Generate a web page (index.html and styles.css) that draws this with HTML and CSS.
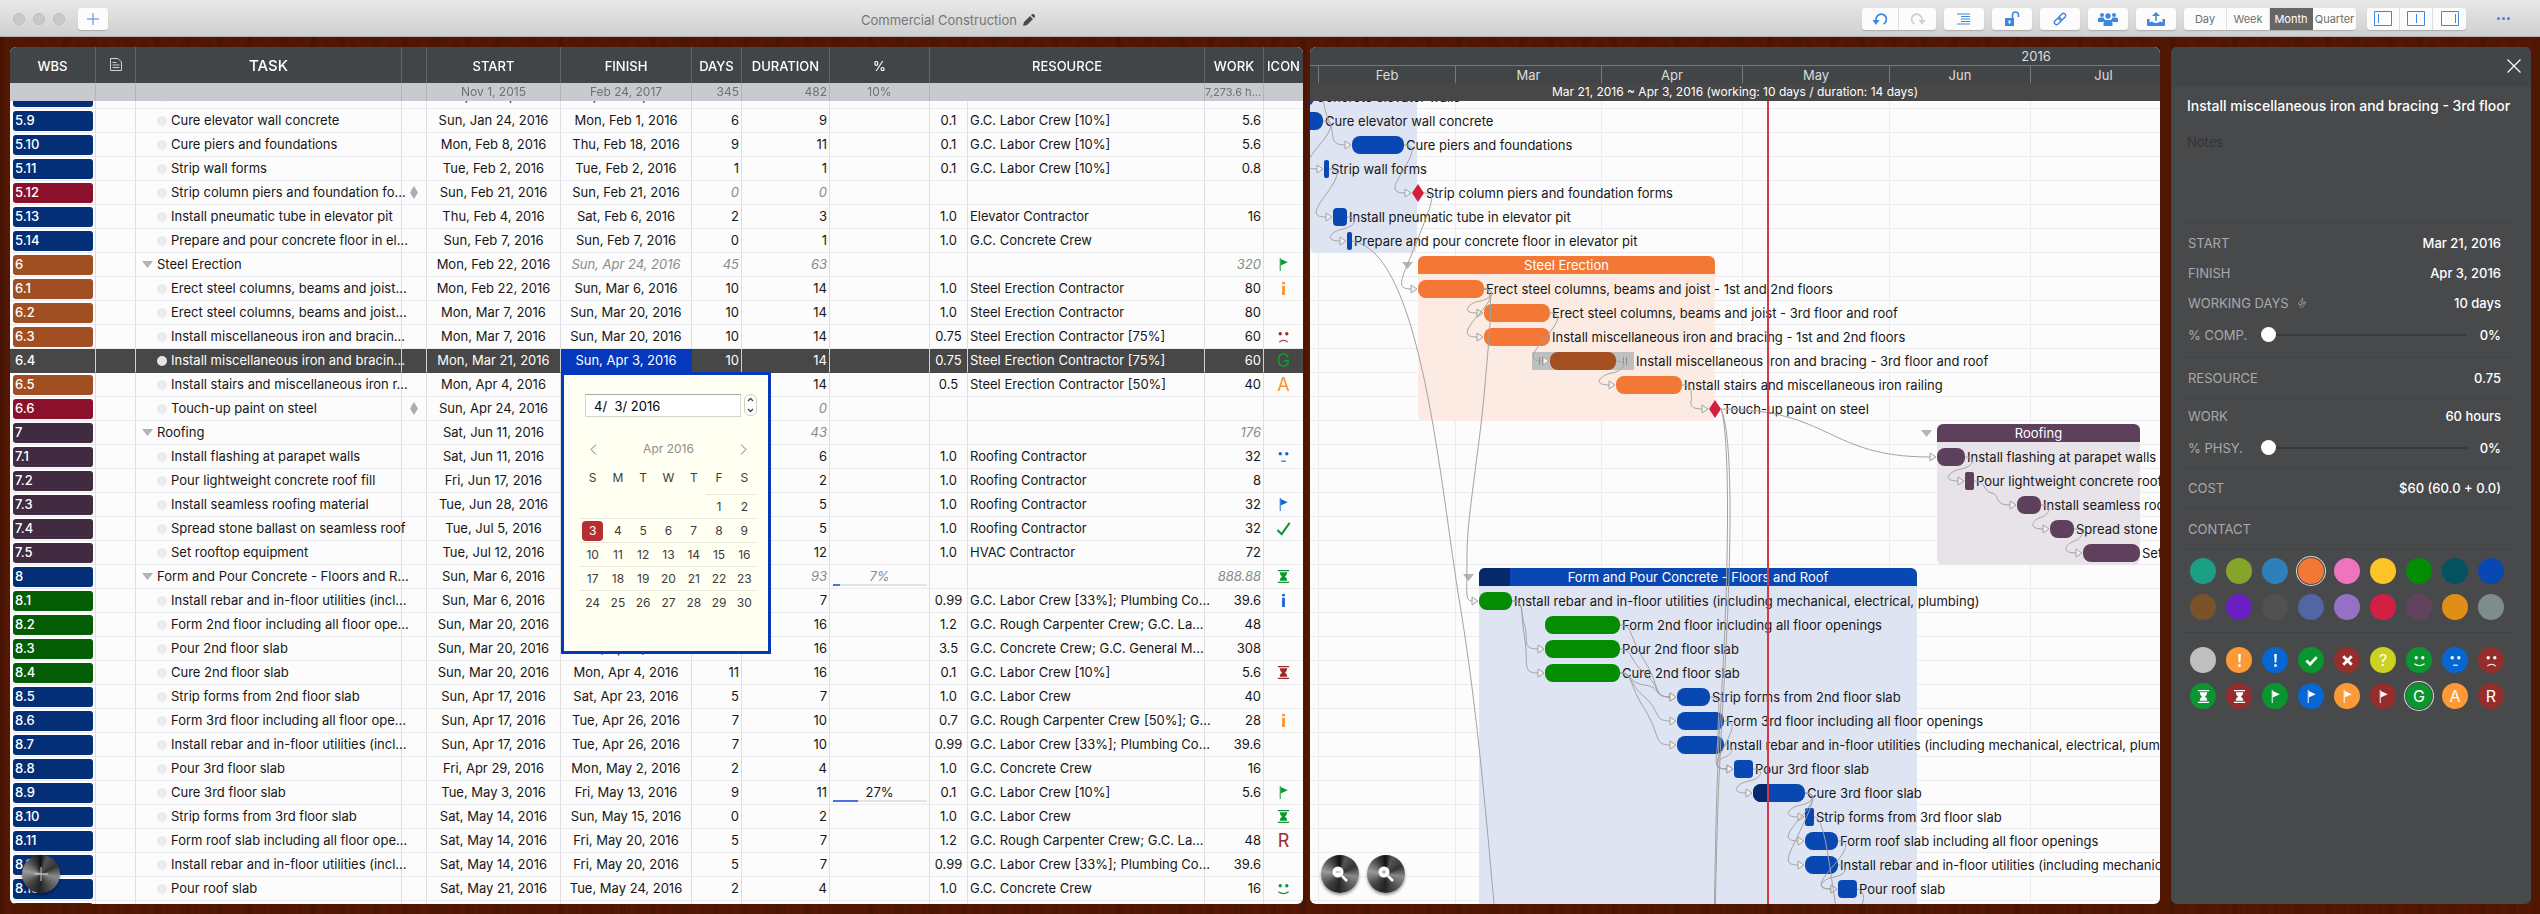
FILE: index.html
```html
<!DOCTYPE html>
<html lang="en">
<head>
<meta charset="utf-8">
<title>Commercial Construction</title>
<link rel="stylesheet" href="styles.css">
</head>
<body class="app">

<svg class="defs" width="0" height="0" aria-hidden="true">
  <symbol id="i-flag" viewBox="0 0 16 16"><path d="M4.500 1v14" stroke="currentColor" fill="none"/><path d="M5 2l7.500 3.500L5 9z" fill="currentColor"/></symbol>
  <symbol id="i-info" viewBox="0 0 16 16"><path d="M6.500 1h3v2.500h-3zM6.500 5h3v10h-3z" fill="currentColor"/></symbol>
  <symbol id="i-sad" viewBox="0 0 16 16"><circle cx="4.500" cy="5" r="1.800" fill="currentColor"/><circle cx="11.500" cy="5" r="1.800" fill="currentColor"/><path d="M3.500 14q4.500-4 9 0" stroke="currentColor" stroke-width="1.200" fill="none"/></symbol>
  <symbol id="i-flat" viewBox="0 0 16 16"><circle cx="4.500" cy="5" r="1.800" fill="currentColor"/><circle cx="11.500" cy="5" r="1.800" fill="currentColor"/><path d="M5.500 13h5" stroke="currentColor" stroke-width="1.200" fill="none"/></symbol>
  <symbol id="i-smile" viewBox="0 0 16 16"><circle cx="4.500" cy="5" r="1.800" fill="currentColor"/><circle cx="11.500" cy="5" r="1.800" fill="currentColor"/><path d="M2.500 11.500q5.500 4 11 0" stroke="currentColor" stroke-width="1.200" fill="none"/></symbol>
  <symbol id="i-check" viewBox="0 0 16 16"><path d="M1.500 9.500L6 14 14.500 2" stroke="currentColor" stroke-width="2.200" fill="none"/></symbol>
  <symbol id="i-glass" viewBox="0 0 16 16"><path d="M2 1h12v1.500H2zM2 13.500h12V15H2zM4 3.500h8q0 3-2.500 4.500Q12 9.500 12 12.500H4Q4 9.500 6.500 8 4 6.500 4 3.500z" fill="currentColor"/></symbol>
  <symbol id="i-bang" viewBox="0 0 16 16"><path d="M6.600 1h2.800l-.5 9H7.100zM6.700 12h2.600v2.600H6.700z" fill="currentColor"/></symbol>
  <symbol id="i-tick" viewBox="0 0 16 16"><path d="M2.500 8l4 4L13.500 4.500" stroke="currentColor" stroke-width="2.800" fill="none"/></symbol>
  <symbol id="i-cross" viewBox="0 0 16 16"><path d="M3.500 3.500l9 9m0-9l-9 9" stroke="currentColor" stroke-width="3" fill="none"/></symbol>
</svg>

<header class="toolbar">
  <div class="toolbar-left">
    <span class="light"></span><span class="light"></span><span class="light"></span>
    <button class="tool tool-add" aria-label="New"><svg width="12" height="12" viewBox="0 0 12 12"><path d="M6 0v12M0 6h12"/></svg></button>
  </div>
  <h1 class="doc-title">Commercial Construction
    <svg class="pencil" width="12" height="12" viewBox="0 0 12 12"><path d="M0 12l1-4L7 2l3 3-6 6zM8 1l1-1h1.500L12 1.500V3l-1 1z"/></svg>
  </h1>
  <div class="toolbar-right">
    <div class="group">
      <button class="tool" aria-label="Undo"><svg width="17" height="14" viewBox="0 0 17 14"><path class="thick" d="M4 10V7a5.200 5.200 0 1 1 7.500 5"/><path class="fill" d="M.5 8h7L4 13z"/></svg></button>
      <button class="tool tool-off" aria-label="Redo"><svg width="17" height="14" viewBox="0 0 17 14"><path class="thick" d="M13 10V7a5.200 5.200 0 1 0-7.500 5"/><path class="fill" d="M9.500 8h7L13 13z"/></svg></button>
    </div>
    <button class="tool" aria-label="Outline"><svg width="14" height="12" viewBox="0 0 14 12"><path d="M0 1h13M4 3.500h9M4 6h9M4 8.500h9M0 11h13"/></svg></button>
    <button class="tool" aria-label="Lock"><svg width="16" height="16" viewBox="0 0 16 16"><path class="fill" fill-rule="evenodd" d="M1 7h9v8H1zM4.500 9.500v3h2v-3z"/><path class="thick" d="M8.500 7V4a3 3 0 0 1 6 0v2"/></svg></button>
    <button class="tool" aria-label="Link"><svg width="14" height="14" viewBox="0 0 16 16"><g class="thick" transform="rotate(-45 8 8)"><rect x="0" y="5.500" width="9" height="5" rx="2.500"/><rect x="7" y="5.500" width="9" height="5" rx="2.500"/></g></svg></button>
    <button class="tool" aria-label="Resources"><svg width="20" height="14" viewBox="0 0 20 14"><g class="fill"><circle cx="4" cy="3" r="2"/><circle cx="16" cy="3" r="2"/><circle cx="10" cy="4" r="2.700"/><path d="M0 10V7q0-1.500 2-1.500h3.500L7 8q-2 1-2 2zM20 10V7q0-1.500-2-1.500h-3.500L13 8q2 1 2 2zM5.500 14v-4q0-2 2-2h5q2 0 2 2v4z"/></g></svg></button>
    <button class="tool" aria-label="Share"><svg width="18" height="14" viewBox="0 0 18 14"><path class="fill" d="M0 7h2.500v3.500L5 9.500q4 3 8 0l2.500 1V7H18v6q0 1-1 1H1q-1 0-1-1zM9 0l4 4H5z"/><path class="thick" d="M9 3v6"/></svg></button>
    <div class="group scale">
      <button class="seg">Day</button><button class="seg">Week</button><button class="seg seg-on">Month</button><button class="seg">Quarter</button>
    </div>
    <div class="group panes">
      <button class="tool" aria-label="Left pane"><svg width="18" height="15" viewBox="0 0 18 15"><path d="M.5.5h17v14H.5zM4.500 3v9"/></svg></button>
      <button class="tool" aria-label="Split panes"><svg width="18" height="15" viewBox="0 0 18 15"><path d="M.5.5h17v14H.5zM9.500 3v9"/></svg></button>
      <button class="tool" aria-label="Right pane"><svg width="18" height="15" viewBox="0 0 18 15"><path d="M.5.5h17v14H.5zM14.500 3v9"/></svg></button>
    </div>
    <button class="more" aria-label="More"><svg width="13" height="3" viewBox="0 0 13 3"><g class="fill"><circle cx="1.500" cy="1.500" r="1.500"/><circle cx="6.500" cy="1.500" r="1.500"/><circle cx="11.500" cy="1.500" r="1.500"/></g></svg></button>
  </div>
</header>

<main class="desk">
  <section class="sheet">
    <div class="sheet-scroll" id="sheet-scroll">
      <table class="tasks">
        <colgroup>
          <col style="width:86px"><col style="width:40px"><col><col style="width:25px"><col style="width:134px"><col style="width:131px"><col style="width:50px"><col style="width:88px"><col style="width:100px"><col style="width:38px"><col style="width:237px"><col style="width:59px"><col style="width:39px">
        </colgroup>
        <thead>
          <tr class="heads">
            <th>WBS</th>
            <th><svg width="12" height="13" viewBox="0 0 12 13"><path d="M.5.5h7.500l3.500 3.500v8.500H.5zM2.500 4.500h4M2.500 7h7M2.500 9.500h7" fill="none" stroke="#d0d1d2"/></svg></th>
            <th class="big">TASK</th><th></th><th>START</th><th>FINISH</th><th>DAYS</th><th>DURATION</th><th>%</th><th colspan="2">RESOURCE</th><th>WORK</th><th>ICON</th>
          </tr>
          <tr class="totals">
            <td></td><td></td><td></td><td></td><td class="mid">Nov 1, 2015</td><td class="mid">Feb 24, 2017</td><td class="num">345</td><td class="num">482</td><td class="mid">10%</td><td colspan="2"></td><td class="num total-work">7,273.6 h...</td><td></td>
          </tr>
        </thead>
        <tbody id="rows"></tbody>
      </table>
    </div>
    <button class="knob knob-add" aria-label="Add task"><svg width="14" height="14" viewBox="0 0 14 14"><path d="M7 0v14M0 7h14" stroke="#d8d8d8"/></svg></button>
  </section>

  <section class="gantt">
    <div class="gantt-head">
      <div class="years" id="years"></div>
      <div class="months" id="months"></div>
      <p class="span">Mar 21, 2016 ~ Apr 3, 2016 (working: 10 days / duration: 14 days)</p>
    </div>
    <div class="gantt-scroll" id="gantt-scroll">
      <div class="chart" id="chart"></div>
    </div>
    <div class="knobs">
      <button class="knob" aria-label="Zoom out"><svg width="16" height="16" viewBox="0 0 16 16"><circle cx="6" cy="6" r="5.500" fill="#fff"/><path d="M10 10l5 5" stroke="#fff" stroke-width="2.500"/><path d="M4 6h4" stroke="#999"/></svg></button>
      <button class="knob" aria-label="Zoom in"><svg width="16" height="16" viewBox="0 0 16 16"><circle cx="6" cy="6" r="5.500" fill="#fff"/><path d="M10 10l5 5" stroke="#fff" stroke-width="2.500"/><path d="M4 6h4M6 4v4" stroke="#999"/></svg></button>
    </div>
  </section>

  <aside class="details">
    <div class="details-head">
      <button class="close" aria-label="Close"><svg width="14" height="14" viewBox="0 0 14 14"><path d="M.5.5l13 13m0-13l-13 13" stroke="#fff" stroke-width="1.200"/></svg></button>
    </div>
    <div class="memo">
      <input class="name" aria-label="Task name" value="Install miscellaneous iron and bracing - 3rd floor and roof">
      <textarea class="notes" aria-label="Notes" placeholder="Notes"></textarea>
    </div>
    <div class="block block-dates">
      <div class="field"><span class="label">START</span><span class="value">Mar 21, 2016</span></div>
      <div class="field"><span class="label">FINISH</span><span class="value">Apr 3, 2016</span></div>
      <div class="field"><span class="label">WORKING DAYS <svg class="pin" width="10" height="12" viewBox="0 0 10 12"><path d="M1 7l5-6-1 4M5 11l4-6-5 3M1 7l3 1M3 11l2-6 4 0" fill="none" stroke="#8a8b8d"/></svg></span><span class="value">10 days</span></div>
      <div class="field"><label class="label" for="comp">% COMP.</label><input class="slider" id="comp" type="range" value="0"><span class="value">0%</span></div>
    </div>
    <div class="block"><div class="field"><span class="label">RESOURCE</span><span class="value">0.75</span></div></div>
    <div class="block block-work">
      <div class="field"><span class="label">WORK</span><span class="value">60 hours</span></div>
      <div class="field"><label class="label" for="phsy">% PHSY.</label><input class="slider" id="phsy" type="range" value="0"><span class="value">0%</span></div>
    </div>
    <div class="block"><div class="field"><span class="label">COST</span><span class="value">$60 (60.0 + 0.0)</span></div></div>
    <div class="block"><div class="field"><span class="label">CONTACT</span></div></div>
    <div class="dots dots-colors" id="colors"></div>
    <div class="dots" id="marks"></div>
  </aside>
</main>
<script src="app.js"></script>
</body>
</html>
```

FILE: styles.css
```css
* { box-sizing: border-box; }
body.app {
  margin: 0;
  height: 100vh;
  display: flex;
  flex-direction: column;
  overflow: hidden;
  font: 13px/18px Inter, "Liberation Sans", sans-serif;
  color: #161616;
  background-color: #511703;
  background-image:
    repeating-linear-gradient(90deg, rgba(0,0,0,.06) 0 2px, transparent 2px 7px, rgba(120,40,10,.08) 7px 9px, transparent 9px 13px),
    repeating-linear-gradient(90deg, rgba(0,0,0,.07) 0 5px, transparent 5px 31px);
}
button { font: inherit; padding: 0; border: 0; background: none; }
.defs { display: none; }

/* toolbar */
.toolbar {
  flex: none;
  display: flex;
  align-items: center;
  height: 37px;
  padding: 1px 30px 0 13px;
  border-bottom: 1px solid #b4b0ae;
  background: linear-gradient(#e9e9e9, #cfcfcf);
}
.toolbar-left, .toolbar-right { display: flex; align-items: center; gap: 8px; }
.light { width: 12px; height: 12px; border-radius: 50%; background: #c9c9c9; border: 1px solid #bdbdbd; }
.doc-title { flex: 1; display: flex; align-items: center; justify-content: center; gap: 6px; margin: 0; padding: 3px 74px 0 0; font-size: 13px; font-weight: 400; color: #757575; }
.pencil path { fill: #4a4a4a; }
.tool { display: flex; align-items: center; justify-content: center; width: 40px; height: 22px; border-radius: 3px; background: #fcfcfc; box-shadow: 0 1px 1px rgba(0,0,0,.18); color: #3f87dc; }
.tool-add { width: 30px; margin-left: 5px; }
.tool path, .tool rect { fill: none; stroke: currentColor; }
.tool .thick, .tool .thick rect { stroke-width: 1.6; fill: none; stroke: currentColor; }
.tool .fill, .tool .fill path, .more .fill { fill: currentColor; stroke: none; }
.tool-off { color: #cfcfcf; }
.group { display: flex; }
.group .tool { width: 37px; border-radius: 0; border-right: 1px solid #e2e2e2; }
.group .tool:first-child { border-radius: 3px 0 0 3px; }
.group .tool:last-child { border-right: 0; border-radius: 0 3px 3px 0; }
.panes { margin-left: 3px; }
.panes .tool { width: 33px; }
.scale { border-radius: 3px; background: #fcfcfc; box-shadow: 0 1px 1px rgba(0,0,0,.18); }
.seg { width: 43px; height: 22px; font-size: 11px; color: #6e6e6e; border-right: 1px solid #e2e2e2; }
.seg:last-child { border-right: 0; }
.seg-on { background: #666; color: #fff; border-color: #666; }
.more { margin-left: 23px; color: #3f87dc; display: flex; }

/* panels */
.desk { flex: 1; min-height: 0; display: flex; padding: 10px 9px 10px 10px; }
.sheet, .gantt, .details { position: relative; border-radius: 6px; overflow: hidden; }
.sheet { flex: 1293 1 0; min-width: 0; margin-right: 7px; background: #fcfcfc; }
.gantt { flex: 850 1 0; min-width: 0; margin-right: 11px; background: #fcfcfc; display: flex; flex-direction: column; }
.details { flex: 0 0 360px; background: #48494b; color: #fff; }
.sheet-scroll { height: 100%; overflow: hidden; }

/* task table */
.tasks { width: 100%; table-layout: fixed; border-collapse: separate; border-spacing: 0; }
.tasks thead { position: sticky; top: 0; z-index: 2; }
.heads th { height: 36px; padding: 2px 0 0; font-weight: 500; color: #fff; background: #424547; border-right: 1px solid #636567; }
.heads .big { font-size: 15px; }
.totals td { height: 18px; padding: 0 2px; font-size: 12px; line-height: 18px; white-space: nowrap; color: #707174; background: #c9cacf; border-right: 1px solid #b3b4b8; }
.tasks tr > :last-child { border-right: 0; }
.tasks .mid { text-align: center; }
.tasks .num { text-align: right; padding: 0 2px 0 0; }
.totals .total-work { font-size: 11px; }
.row td { height: 24px; padding: 0; line-height: 23px; border-right: 1px solid #dfdfe2; border-bottom: 1px solid #ebebee; white-space: nowrap; }
.row .sum { font-style: italic; color: #8a8a8a; }
.row .chip-cell { padding: 1px 2px 1px 3px; }
.chip { display: block; height: 20px; line-height: 19px; padding-left: 2px; border-radius: 3px; color: #fff; font-weight: 500; }
.c-blue { background: #042f76; }
.c-red { background: #8a102b; }
.c-orange { background: #a04f22; }
.c-purple { background: #402b40; }
.c-green { background: #045c04; }
.task { display: flex; align-items: center; gap: 4px; padding: 0 0 0 21px; }
.task-group { padding-left: 6px; }
.bullet { flex: none; width: 10px; height: 10px; border-radius: 50%; background: #ececec; }
.fold { flex: none; width: 11px; height: 7px; background: #b4b4b4; clip-path: polygon(0 0, 100% 0, 50% 100%); }
.gem { display: block; width: 8px; height: 13px; margin: 0 auto; background: #adadad; clip-path: polygon(50% 0, 100% 50%, 50% 100%, 0 50%); }
.row .res { padding: 0 0 0 2px; }
.icon { display: flex; justify-content: center; align-items: center; height: 23px; font-size: 18px; }
.icon svg { width: 15px; height: 15px; }
.k-green { color: #0f9634; } .k-orange { color: #fb9433; } .k-red { color: #9b2c2c; } .k-blue { color: #1467d0; }
.pct { position: relative; }
.meter { position: absolute; left: 3px; right: 2px; bottom: 2px; height: 2px; background: #e4e4e6; }
.meter-fill { height: 100%; background: #4a6fe6; }
.picked td { background: #474747; color: #fff; border-right-color: #d0d0d0; border-bottom-color: #474747; }
.picked .chip { background: none; }
.picked .bullet { background: #e4e4e4; }
.row .editing { position: relative; background: #0638bd; border-color: #0638bd; }

/* date picker */
.picker { position: absolute; z-index: 3; left: 0; top: 100%; width: 210px; height: 282px; padding: 19px 11px 19px 16px; border: 3px solid #0638bd; background: #fffff2; color: #3c3c3c; font-size: 12px; line-height: 24px; }
.picker-field { display: flex; gap: 3px; padding: 0 0 0 5px; }
.picker-input { flex: 1; min-width: 0; height: 23px; padding: 0 8px; border: 1px solid #d6d6d0; border-top-color: #a9a9a4; background: #fff; font: 13px Inter, sans-serif; }
.stepper { width: 13px; height: 22px; border: 1px solid #cfcfcf; border-radius: 6px; background: #fff; display: flex; align-items: center; justify-content: center; }
.picker-nav { display: flex; justify-content: space-between; align-items: center; padding: 0 10px; margin: 20px 0 5px; color: #8f8f88; }
.picker-nav button { display: flex; }
.cal { display: grid; grid-template-columns: repeat(7, 1fr); text-align: center; }
.cal-head { margin-bottom: 4px; }
.day { height: 24px; line-height: 24px; border-top: 1px solid #e7e7dd; color: inherit; }
.day-gap { grid-column: span 5; }
.day-on { color: #fff; }
.day-on span { display: block; margin: 1px 2px; line-height: 20px; border-radius: 4px; background: #b52f32; }

/* gantt */
.gantt-head { flex: none; background: #424547; color: #dcdcdc; text-align: center; font-size: 13px; }
.years { height: 18px; overflow: hidden; }
.months { height: 18px; display: flex; overflow: hidden; border-top: 1px solid #77797b; }
.month { flex: none; border-right: 1px solid #77797b; }
.span { margin: 0; height: 18px; overflow: hidden; background: #474747; color: #fff; font-size: 12px; }
.gantt-scroll { flex: 1; min-height: 0; overflow: hidden; }
.chart { position: relative; background: repeating-linear-gradient(transparent 0 23px, #ececef 23px 24px); }
.chart-line, .zone, .bar, .bar-label, .today, .links, .gantt-fold, .handle { position: absolute; }
.chart-line { top: 0; bottom: 0; width: 1px; background: #ededf0; }
.zone { border-radius: 0 0 6px 6px; }
.bar { height: 18px; border-radius: 8px; overflow: hidden; }
.bar-thin { border-radius: 2px; }
.bar-short { border-radius: 4px; }
.bar-group { border-radius: 6px 6px 0 0; color: #fff; text-align: center; }
.bar-done { position: absolute; left: 0; top: 0; bottom: 0; background: #06296c; }
.bar-text { position: relative; line-height: 19px; }
.bar-label { white-space: nowrap; line-height: 19px; }
.g-blue { background: #0947b3; } .g-orange { background: #f37735; } .g-brown { background: #a34f20; } .g-purple { background: #5e405c; } .g-green { background: #048c02; }
.z-blue { background: #dfe4f3; } .z-orange { background: #fcebe2; } .z-purple { background: #e7e3e8; }
.diamond { width: 12px; height: 18px; border-radius: 0; background: #d41f3f; clip-path: polygon(50% 0, 100% 50%, 50% 100%, 0 50%); }
.handle { height: 18px; background: #bfbfbf; display: flex; justify-content: space-between; padding: 5px 7px; }
.handle i { width: 4px; border: solid #8c8c8c; border-width: 0 1px; }
.gantt-fold { width: 11px; height: 7px; background: #b4b4b4; clip-path: polygon(0 0, 100% 0, 50% 100%); }
.links { left: 0; top: 0; width: 100%; height: 100%; pointer-events: none; }
.links path { fill: none; stroke: #a3a3a3; stroke-width: 1; }
.links .tip { fill: #f2f2f4; }
.today { top: 0; bottom: 0; width: 2px; background: #d63845; }

/* round metal buttons */
.knob { display: flex; align-items: center; justify-content: center; width: 38px; height: 38px; border-radius: 50%; box-shadow: 0 2px 3px rgba(0,0,0,.4); background: conic-gradient(from 20deg, #555, #333 12%, #8a8a8a 22%, #555 34%, #222 46%, #444 58%, #9a9a9a 72%, #4a4a4a 84%, #111 94%, #555); }
.knob-add { position: absolute; left: 12px; bottom: 11px; z-index: 4; }
.knobs { position: absolute; left: 11px; bottom: 11px; display: flex; gap: 8px; }

/* details */
.details-head { height: 40px; padding: 12px 10px 0 0; display: flex; justify-content: flex-end; align-items: flex-start; background: #424547; }
.memo { margin: 0 19px 0 13px; height: 136px; padding: 8px 0 0 3px; border-bottom: 1px solid #414244; }
.name { display: block; width: 100%; height: 22px; padding: 0; border: 0; background: none; color: #fff; font: 500 14px/22px Inter, sans-serif; }
.notes { display: block; width: 100%; height: 70px; margin-top: 15px; padding: 0; border: 0; resize: none; background: none; color: #fff; font: 13px/20px Inter, sans-serif; }
.notes::placeholder { color: #333436; }
.block { margin: 0 19px 0 13px; padding: 5px 11px 5px 4px; border-bottom: 1px solid #414244; }
.block-dates { padding-bottom: 6px; }
.block-work { padding-top: 2px; padding-bottom: 3px; }
.field { display: flex; align-items: center; height: 30px; }
.field:has(.slider) { height: 33px; }
.label { flex: 1; color: #a9aaac; }
.pin { margin-left: 5px; vertical-align: -1px; }
.value { color: #fff; font-weight: 500; text-align: right; }
.slider + .value { width: 34px; }
.slider { appearance: none; width: 206px; height: 16px; margin: 0; background: linear-gradient(#38393b, #38393b) center / 100% 2px no-repeat; }
.slider::-webkit-slider-thumb { appearance: none; width: 15px; height: 15px; border-radius: 50%; background: #fff; }
.dots { display: grid; grid-template-columns: repeat(9, 36px); row-gap: 10px; margin: 0 19px 0 14px; padding: 14px 0; }
.dots-colors { padding: 8px 0 12px; border-bottom: 1px solid #414244; }
.dot { width: 26px; height: 26px; margin-left: 5px; border-radius: 50%; color: #fff; display: flex; align-items: center; justify-content: center; font-size: 16px; line-height: 26px; }
.dot svg { width: 15px; height: 15px; }
.dot-on { box-shadow: 0 0 0 1px #48494b, 0 0 0 2px #d8d8d8; }
```

FILE: app.js
```js
const SCALE = 4.715, ORIGIN = 9, ROW = 24;
const DAY = 86400000;
const feb1 = Date.UTC(2016, 1, 1);
const dayX = (m, d) => Math.round(ORIGIN + (Date.UTC(2016, m - 1, d) - feb1) / DAY * SCALE);
const MONTHS = ['Jan', 'Feb', 'Mar', 'Apr', 'May', 'Jun', 'Jul', 'Aug'];
const WEEK = ['Sun', 'Mon', 'Tue', 'Wed', 'Thu', 'Fri', 'Sat'];
const fmt = ([m, d]) => `${WEEK[new Date(Date.UTC(2016, m - 1, d)).getUTCDay()]}, ${MONTHS[m - 1]} ${d}, 2016`;

const REBAR = 'Install rebar and in-floor utilities (including mechanical, electrical, plumbing)';
const L10 = 'G.C. Labor Crew [10%]', SEC = 'Steel Erection Contractor', ROOF = 'Roofing Contractor', GCC = 'G.C. Concrete Crew';
const LPC = 'G.C. Labor Crew [33%]; Plumbing Co...', RCC = 'G.C. Rough Carpenter Crew; G.C. La...';
// wbs, name, start, finish, days, duration, units, resource, work, color, icon, extra
const TASKS = [
  ['5.8', 'Concrete elevator walls', [1, 17], [1, 30], 10, 14, '1.0', GCC, '8', 'blue'],
  ['5.9', 'Cure elevator wall concrete', [1, 24], [2, 1], 6, 9, '0.1', L10, '5.6', 'blue'],
  ['5.10', 'Cure piers and foundations', [2, 8], [2, 18], 9, 11, '0.1', L10, '5.6', 'blue'],
  ['5.11', 'Strip wall forms', [2, 2], [2, 2], 1, 1, '0.1', L10, '0.8', 'blue'],
  ['5.12', 'Strip column piers and foundation forms', [2, 21], [2, 21], 0, 0, '', '', '', 'red'],
  ['5.13', 'Install pneumatic tube in elevator pit', [2, 4], [2, 6], 2, 3, '1.0', 'Elevator Contractor', '16', 'blue'],
  ['5.14', 'Prepare and pour concrete floor in elevator pit', [2, 7], [2, 7], 0, 1, '1.0', GCC, '', 'blue'],
  ['6', 'Steel Erection', [2, 22], [4, 24], 45, 63, '', '', '320', 'orange', 'green flag', { rows: 6 }],
  ['6.1', 'Erect steel columns, beams and joist - 1st and 2nd floors', [2, 22], [3, 6], 10, 14, '1.0', SEC, '80', 'orange', 'orange info'],
  ['6.2', 'Erect steel columns, beams and joist - 3rd floor and roof', [3, 7], [3, 20], 10, 14, '1.0', SEC, '80', 'orange'],
  ['6.3', 'Install miscellaneous iron and bracing - 1st and 2nd floors', [3, 7], [3, 20], 10, 14, '0.75', SEC + ' [75%]', '60', 'orange', 'red sad'],
  ['6.4', 'Install miscellaneous iron and bracing - 3rd floor and roof', [3, 21], [4, 3], 10, 14, '0.75', SEC + ' [75%]', '60', 'brown', 'green G', { picked: true }],
  ['6.5', 'Install stairs and miscellaneous iron railing', [4, 4], [4, 17], 10, 14, '0.5', SEC + ' [50%]', '40', 'orange', 'orange A'],
  ['6.6', 'Touch-up paint on steel', [4, 24], [4, 24], 0, 0, '', '', '', 'red'],
  ['7', 'Roofing', [6, 11], [7, 23], 30, 43, '', '', '176', 'purple', '', { rows: 5 }],
  ['7.1', 'Install flashing at parapet walls', [6, 11], [6, 16], 4, 6, '1.0', ROOF, '32', 'purple', 'blue flat'],
  ['7.2', 'Pour lightweight concrete roof fill', [6, 17], [6, 18], 1, 2, '1.0', ROOF, '8', 'purple'],
  ['7.3', 'Install seamless roofing material', [6, 28], [7, 2], 4, 5, '1.0', ROOF, '32', 'purple', 'blue flag'],
  ['7.4', 'Spread stone ballast on seamless roof', [7, 5], [7, 9], 4, 5, '1.0', ROOF, '32', 'purple', 'green check'],
  ['7.5', 'Set rooftop equipment', [7, 12], [7, 23], 9, 12, '1.0', 'HVAC Contractor', '72', 'purple'],
  ['8', 'Form and Pour Concrete - Floors and Roof', [3, 6], [6, 6], 66, 93, '', '', '888.88', 'blue', 'green glass', { rows: 14, pct: 7 }],
  ['8.1', REBAR, [3, 6], [3, 12], 5, 7, '0.99', LPC, '39.6', 'green', 'blue info'],
  ['8.2', 'Form 2nd floor including all floor openings', [3, 20], [4, 4], 11, 16, '1.2', RCC, '48', 'green'],
  ['8.3', 'Pour 2nd floor slab', [3, 20], [4, 4], 11, 16, '3.5', 'G.C. Concrete Crew; G.C. General M...', '308', 'green'],
  ['8.4', 'Cure 2nd floor slab', [3, 20], [4, 4], 11, 16, '0.1', L10, '5.6', 'green', 'red glass'],
  ['8.5', 'Strip forms from 2nd floor slab', [4, 17], [4, 23], 5, 7, '1.0', 'G.C. Labor Crew', '40', 'blue'],
  ['8.6', 'Form 3rd floor including all floor openings', [4, 17], [4, 26], 7, 10, '0.7', 'G.C. Rough Carpenter Crew [50%]; G...', '28', 'blue', 'orange info'],
  ['8.7', REBAR, [4, 17], [4, 26], 7, 10, '0.99', LPC, '39.6', 'blue'],
  ['8.8', 'Pour 3rd floor slab', [4, 29], [5, 2], 2, 4, '1.0', GCC, '16', 'blue'],
  ['8.9', 'Cure 3rd floor slab', [5, 3], [5, 13], 9, 11, '0.1', L10, '5.6', 'blue', 'green flag', { pct: 27 }],
  ['8.10', 'Strip forms from 3rd floor slab', [5, 14], [5, 15], 0, 2, '1.0', 'G.C. Labor Crew', '', 'blue', 'green glass'],
  ['8.11', 'Form roof slab including all floor openings', [5, 14], [5, 20], 5, 7, '1.2', RCC, '48', 'blue', 'red R'],
  ['8.12', REBAR, [5, 14], [5, 20], 5, 7, '0.99', LPC, '39.6', 'blue'],
  ['8.13', 'Pour roof slab', [5, 21], [5, 24], 2, 4, '1.0', GCC, '16', 'blue', 'green smile'],
  ['8.14', '', [5, 25], [5, 25], '', '', '', '', '', 'blue', '', { blank: true }],
];

// names shortened to the width of the task column
const SHORT = {
  '5.12': 'Strip column piers and foundation fo...',
  '5.14': 'Prepare and pour concrete floor in el...',
  '6.1': 'Erect steel columns, beams and joist...',
  '6.2': 'Erect steel columns, beams and joist...',
  '6.3': 'Install miscellaneous iron and bracin...',
  '6.4': 'Install miscellaneous iron and bracin...',
  '6.5': 'Install stairs and miscellaneous iron r...',
  '8': 'Form and Pour Concrete - Floors and R...',
  '8.1': 'Install rebar and in-floor utilities (incl...',
  '8.2': 'Form 2nd floor including all floor ope...',
  '8.6': 'Form 3rd floor including all floor ope...',
  '8.7': 'Install rebar and in-floor utilities (incl...',
  '8.11': 'Form roof slab including all floor ope...',
  '8.12': 'Install rebar and in-floor utilities (incl...',
};

const glyph = name => name.length === 1 ? name : `<svg><use href="#i-${name}"/></svg>`;

/* date picker */
const days = [];
for (let d = 1; d <= 30; d++) days.push(d === 3 ? `<button class="day day-on"><span>3</span></button>` : `<button class="day">${d}</button>`);
const PICKER = `<div class="picker">
  <div class="picker-field"><input class="picker-input" aria-label="Finish date" value="4/  3/ 2016">
  <button class="stepper" aria-label="Step date"><svg width="7" height="16" viewBox="0 0 7 16"><path d="M1 4l2.500-2.500L6 4M1 12l2.500 2.500L6 12" fill="none" stroke="#444" stroke-width="1.300"/></svg></button></div>
  <div class="picker-nav"><button aria-label="Previous month"><svg width="7" height="11" viewBox="0 0 7 11"><path d="M6 .5l-5 5 5 5" fill="none" stroke="#777"/></svg></button><span>Apr 2016</span><button aria-label="Next month"><svg width="7" height="11" viewBox="0 0 7 11"><path d="M1 .5l5 5-5 5" fill="none" stroke="#777"/></svg></button></div>
  <div class="cal cal-head">${[...'SMTWTFS'].map(c => `<span>${c}</span>`).join('')}</div>
  <div class="cal"><span class="day-gap"></span>${days.join('')}</div>
</div>`;

/* task table */
document.getElementById('rows').innerHTML = TASKS.map(([wbs, name, start, finish, nd, dur, units, res, work, color, icon, extra = {}]) => {
  const group = !wbs.includes('.'), gem = dur === 0;
  const chip = color === 'brown' ? 'orange' : color;
  const [tone, pic] = (icon || '').split(' ');
  const sum = group ? ' sum' : '', zero = group || gem ? ' sum' : '';
  return `<tr class="row${extra.picked ? ' picked' : ''}">
    <td class="chip-cell"><span class="chip c-${chip}">${extra.blank ? '' : wbs}</span></td><td></td>
    <td>${extra.blank ? '' : `<div class="task${group ? ' task-group' : ''}"><span class="${group ? 'fold' : 'bullet'}"></span><span>${SHORT[wbs] || name}</span></div>`}</td>
    <td>${gem ? '<span class="gem"></span>' : ''}</td>
    <td class="mid">${extra.blank ? '' : fmt(start)}</td>
    <td class="mid${sum}${extra.picked ? ' editing' : ''}">${extra.blank ? '' : fmt(finish)}${extra.picked ? PICKER : ''}</td>
    <td class="num${zero}">${nd}</td><td class="num${zero}">${dur}</td>
    <td class="mid pct${sum}">${extra.pct ? `${extra.pct}%<div class="meter"><div class="meter-fill" style="width:${extra.pct}%"></div></div>` : ''}</td>
    <td class="mid">${units}</td><td class="res">${res}</td>
    <td class="num${sum}">${work}</td>
    <td>${pic ? `<span class="icon k-${tone}">${glyph(pic)}</span>` : ''}</td></tr>`;
}).join('');

/* time scale */
const monthDays = [31, 29, 31, 30, 31, 30, 31];
const jan1 = dayX(1, 1);
document.getElementById('years').innerHTML = `<div style="margin-left:${jan1}px;width:${Math.round(366 * SCALE)}px">2016</div>`;
document.getElementById('months').innerHTML = monthDays.map((n, i) =>
  `<span class="month" style="width:${dayX(i + 2, 1) - dayX(i + 1, 1)}px${i ? '' : `;margin-left:${jan1}px`}">${i ? MONTHS[i] : ''}</span>`).join('');

/* chart */
let html = '';
for (let m = 2; m <= 7; m++) html += `<i class="chart-line" style="left:${dayX(m, 1) - 1}px"></i>`;
html += `<div class="zone z-blue" style="left:0;top:0;width:${dayX(2, 22) - 1}px;height:${7 * ROW}px"></div>`;
const pos = {};
let bars = '';
TASKS.forEach(([wbs, name, start, finish, nd, dur, u, r, w, color, ic, extra = {}], i) => {
  if (extra.blank) return;
  const x0 = dayX(...start), x1 = Math.round(x0 + dur * SCALE), y = i * ROW + 3;
  pos[wbs] = { x0, x1, y: y + 9 };
  const done = extra.pct ? `<span class="bar-done" style="width:${extra.pct}%"></span>` : '';
  if (extra.rows) {
    html += `<div class="zone z-${color}" style="left:${x0}px;top:${y + 18}px;width:${x1 - x0}px;height:${extra.rows * ROW + 3}px"></div>`;
    bars += `<i class="gantt-fold" style="left:${x0 - 16}px;top:${y + 6}px"></i><div class="bar bar-group g-${color}" style="left:${x0}px;top:${y}px;width:${x1 - x0}px">${done}<span class="bar-text">${name}</span></div>`;
    return;
  }
  if (dur === 0) {
    const cx = x0 + 5;
    pos[wbs] = { x0: cx - 6, x1: cx + 6, y: y + 9 };
    bars += `<div class="bar diamond" style="left:${cx - 6}px;top:${y}px"></div><span class="bar-label" style="left:${cx + 8}px;top:${y}px">${name}</span>`;
    return;
  }
  const wide = x1 - x0, kind = wide < 12 ? ' bar-thin' : wide < 24 ? ' bar-short' : '';
  if (extra.picked) bars += `<div class="handle" style="left:${x0 - 18}px;top:${y}px;width:${wide + 36}px"><i></i><i></i></div>`;
  bars += `<div class="bar${kind} g-${color}" style="left:${x0}px;top:${y}px;width:${wide}px">${done}</div><span class="bar-label" style="left:${x1 + (extra.picked ? 20 : 2)}px;top:${y}px">${name}</span>`;
});

/* dependency arrows */
const tip = (x, y) => `<path class="tip" d="M${x - 7} ${y - 4}l6 4-6 4z"/>`;
const link = (a, b) => {
  const s = pos[a], e = pos[b], mx = (s.x1 + 8 + e.x0 - 16) / 2, my = (s.y + e.y) / 2;
  return `<path d="M${s.x1} ${s.y}C${s.x1 + 13} ${s.y} ${s.x1 + 8} ${s.y + 10} ${mx} ${my}S${e.x0 - 24} ${e.y} ${e.x0 - 7} ${e.y}"/>` + tip(e.x0, e.y);
};
const LINKS = '5.8>5.10 5.9>5.11 5.10>5.12 5.11>5.13 5.13>5.14 5.12>6.1 6.1>6.2 6.1>6.3 6.2>6.4 6.4>6.5 6.5>6.6 7.1>7.2 7.2>7.3 7.3>7.4 7.4>7.5 8.1>8.3 8.1>8.4 8.2>8.5 8.3>8.5 8.4>8.5 8.4>8.6 8.4>8.7 8.5>8.8 8.6>8.8 8.7>8.8 8.8>8.9 8.9>8.10 8.9>8.11 8.9>8.12 8.11>8.13 8.12>8.13';
let links = LINKS.split(' ').map(p => link(...p.split('>'))).join('');
const end = TASKS.length * ROW, a = pos['5.14'], b = pos['6.1'], c = pos['6.6'], d = pos['7.1'], f = pos['8.1'], g = pos['8.10'], h = pos['8.13'];
links += `<path d="M${a.x1} ${a.y}C${a.x1 + 70} ${a.y + 10} 130 400 150 520S180 780 186 ${end}"/>`;
links += `<path d="M${b.x1} ${b.y}C${b.x1 + 10} ${b.y} 181 230 175 300S157 430 157 470S${f.x0 - 14} ${f.y} ${f.x0 - 7} ${f.y}"/>` + tip(f.x0, f.y);
links += `<path d="M${c.x1} ${c.y}C${c.x1 + 110} ${c.y} ${d.x0 - 110} ${d.y} ${d.x0 - 7} ${d.y}"/>` + tip(d.x0, d.y);
links += `<path d="M${c.x1} ${c.y}C${c.x1 + 10} ${c.y + 30} 418 500 412 600S406 740 404 ${end}"/><path d="M${c.x1} ${c.y}C${c.x1 + 14} ${c.y + 30} 420 500 414 600S407 740 405 ${end}"/>`;
links += `<path d="M${g.x1} ${g.y}C${g.x1 + 12} ${g.y} ${g.x1 + 16} ${g.y + 60} 529 ${end}"/><path d="M${h.x1} ${h.y}q14 4-2 30"/>`;

const chart = document.getElementById('chart');
chart.style.height = end + 'px';
chart.innerHTML = html + bars + `<svg class="links">${links}</svg><i class="today" style="left:${dayX(5, 6)}px"></i>`;
document.getElementById('sheet-scroll').scrollTop = 16;
document.getElementById('gantt-scroll').scrollTop = 16;

/* color and marker palettes */
const COLORS = ['#1a9f84', '#87a42a', '#2d80ba', '#f37735', '#ee74bf', '#fdc428', '#048c02', '#035262', '#0947b3', '#7a5228', '#6a1fc0', '#515151', '#5167a5', '#9570c4', '#d41f45', '#62435f', '#e08e16', '#7e8c8d'];
document.getElementById('colors').innerHTML = COLORS.map((c, i) => `<button class="dot${i === 3 ? ' dot-on' : ''}" aria-label="Color ${i + 1}" style="background:${c}"></button>`).join('');
const G = '#0a962e', R = '#962d2d', B = '#0667d3', O = '#fe9a35';
const MARKS = [['#bfbfbf', ''], [O, 'bang'], [B, 'bang'], [G, 'tick'], [R, 'cross'], ['#cdd11f', '?'], [G, 'smile'], [B, 'flat'], [R, 'sad'], [G, 'glass'], [R, 'glass'], [G, 'flag'], [B, 'flag'], [O, 'flag'], [R, 'flag'], [G, 'G'], [O, 'A'], [R, 'R']];
document.getElementById('marks').innerHTML = MARKS.map(([c, n], i) => `<button class="dot${i === 15 ? ' dot-on' : ''}" aria-label="Marker ${i + 1}" style="background:${c}">${n ? glyph(n) : ''}</button>`).join('');
```
